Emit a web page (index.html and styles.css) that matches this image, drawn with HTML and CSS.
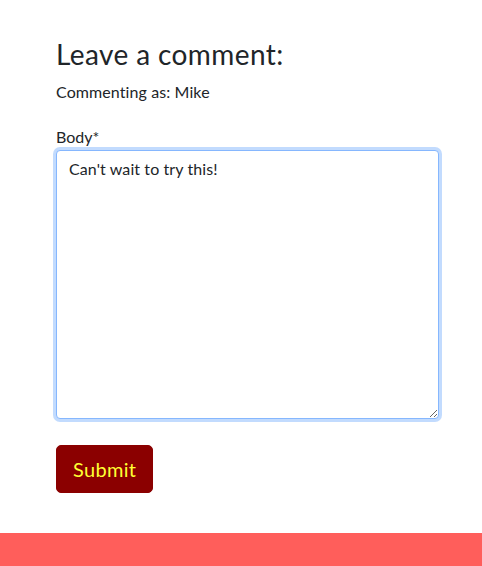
FILE: index.html
```html
<!DOCTYPE html>
<html lang="en">
<head>
<meta charset="utf-8">
<title>Leave a comment</title>
<link rel="stylesheet" href="styles.css">
</head>
<body>
<main class="page">
  <section class="comment-box">
    <h3 class="title">Leave a comment:</h3>
    <p class="as">Commenting as: Mike</p>
    <form class="form">
      <label class="label" for="body">Body*</label>
      <textarea class="field" id="body" name="body">Can't wait to try this!</textarea>
      <button class="submit" type="button">Submit</button>
    </form>
  </section>
</main>
<footer class="footer"></footer>
</body>
</html>
```

FILE: styles.css
```css
* { box-sizing: border-box; }
html, body { margin: 0; padding: 0; }
body {
  font-family: Lato, "Open Sans", sans-serif;
  font-size: 16px;
  line-height: 1.5;
  color: #212529;
  background: #fff;
}
.page {
  padding: 38px 0 40px 56px;
}
.comment-box {
  width: 383px;
}
.title {
  margin: 0 0 8px 0;
  font-size: 28px;
  font-weight: 400;
  line-height: 1.2;
  letter-spacing: 0.4px;
}
.as {
  margin: 0 0 21px 0;
  letter-spacing: 0.1px;
}
.form {
  display: flex;
  flex-direction: column;
  align-items: flex-start;
}
.label {
  display: block;
  margin: 0 0 1px 0;
}
.field {
  display: block;
  width: 383px;
  height: 269px;
  padding: 6px 12px 6px 12px;
  font: inherit;
  letter-spacing: 0.1px;
  color: #212529;
  background: #fff;
  border: 1px solid #86b7fe;
  border-radius: 4px;
  box-shadow: 0 0 0 3px rgba(13, 110, 253, 0.25);
  outline: none;
  resize: vertical;
  margin: 0 0 26px 0;
}
.submit {
  font: inherit;
  font-size: 20px;
  line-height: 30px;
  letter-spacing: 0.3px;
  width: 97px;
  padding: 8px 16px;
  color: #ffff33;
  background: #8b0000;
  border: 1px solid #8b0000;
  border-radius: 5px;
  cursor: pointer;
}
.footer {
  height: 33px;
  background: #ff5e5b;
}
```
